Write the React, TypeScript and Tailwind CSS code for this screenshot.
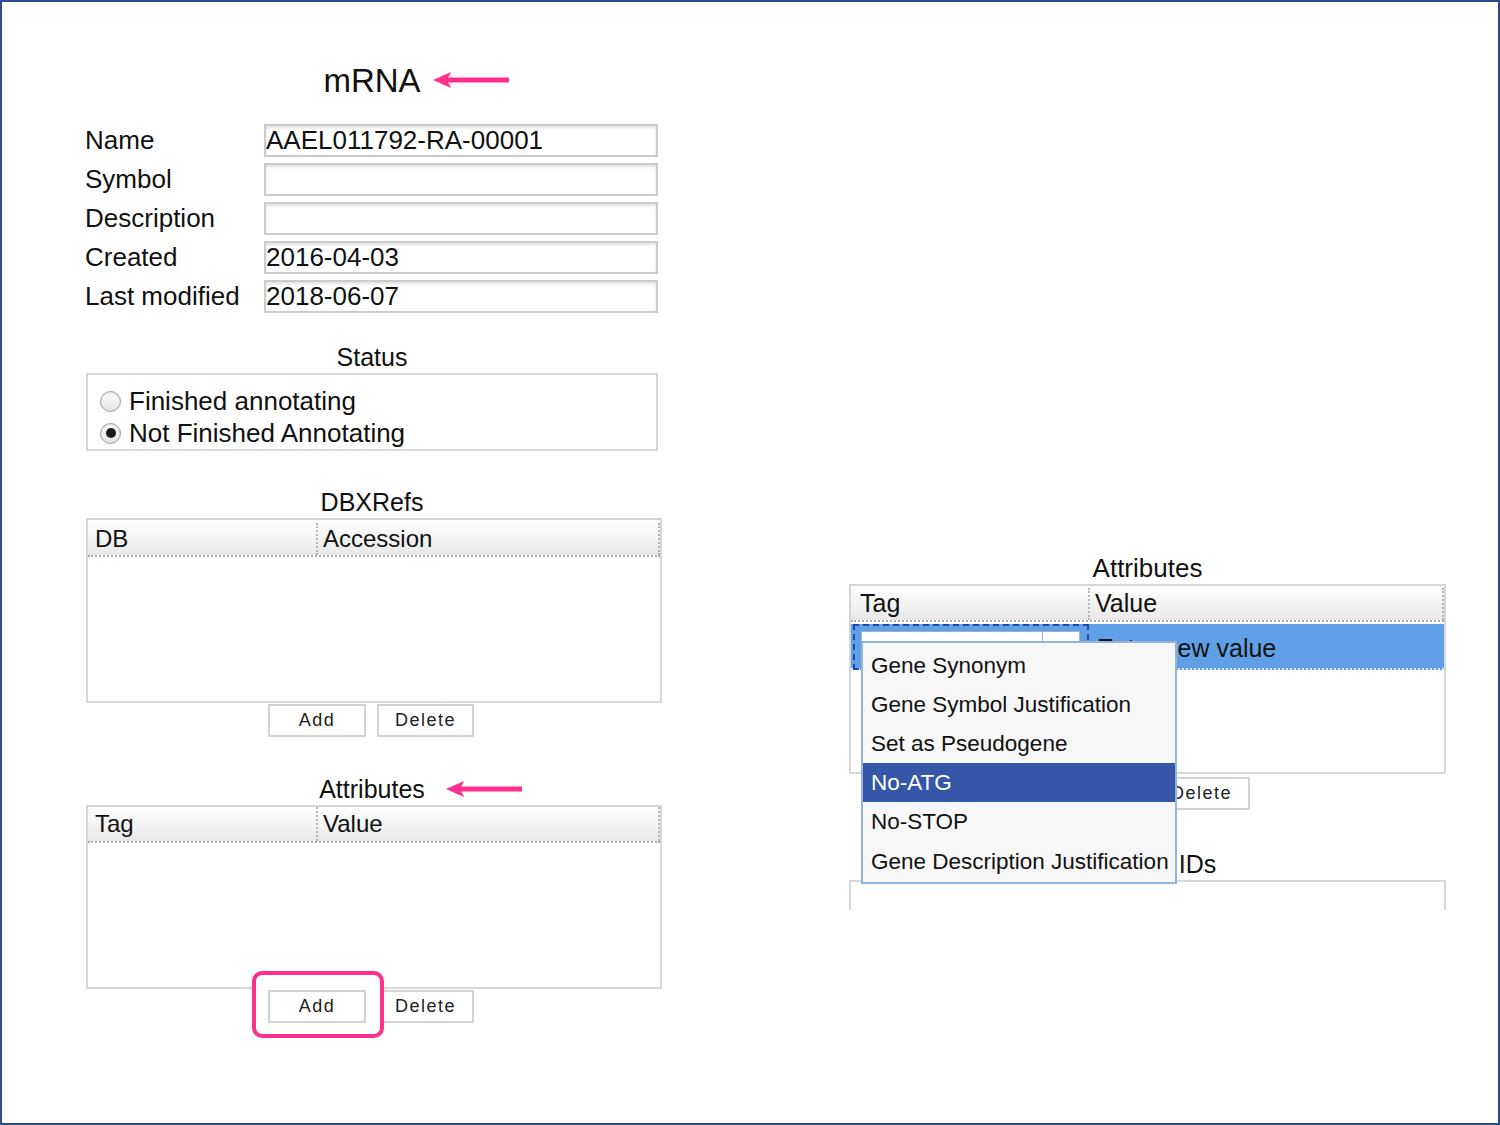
import React from "react";

const PINK = "#ff2f8e";

function Arrow({ className }: { className?: string }) {
  return (
    <svg width="78" height="18" viewBox="0 0 78 18" className={className}>
      <rect x="12" y="6.5" width="64" height="5" fill={PINK} />
      <polygon points="0,9 18,1 14,9 18,17" fill={PINK} />
    </svg>
  );
}

function Radio({ checked }: { checked?: boolean }) {
  return (
    <span className="w-[21px] h-[21px] rounded-full border border-[#9c9c9c] bg-linear-to-b from-white to-[#e4e4e4] flex items-center justify-center shadow-[inset_0_1px_2px_rgba(0,0,0,0.15)]">
      {checked && <span className="w-[10px] h-[10px] rounded-full bg-[#1a1a1a]" />}
    </span>
  );
}

function Btn({ label, className = "" }: { label: string; className?: string }) {
  return (
    <div
      className={`h-[33px] bg-white border-2 border-[#d2d2d2] flex items-center justify-center text-[18px] tracking-[1.5px] text-[#222] ${className}`}
    >
      {label}
    </div>
  );
}

function Header({
  first,
  second,
  firstW,
  h,
  pl,
  size,
}: {
  first: string;
  second: string;
  firstW: number;
  h: string;
  pl: string;
  size: string;
}) {
  return (
    <div className={`flex ${h} bg-linear-to-b from-white to-[#e8e8e8] border-b-2 border-dotted border-[#ababab] ${size}`}>
      <div className={`flex items-center ${pl} border-r-2 border-dotted border-[#b5b5b5]`} style={{ width: firstW }}>
        {first}
      </div>
      <div className="flex-1 flex items-center pl-[5px] border-r-2 border-dotted border-[#b5b5b5]">{second}</div>
    </div>
  );
}

const fields = [
  ["Name", "AAEL011792-RA-00001"],
  ["Symbol", ""],
  ["Description", ""],
  ["Created", "2016-04-03"],
  ["Last modified", "2018-06-07"],
];

const options = [
  "Gene Synonym",
  "Gene Symbol Justification",
  "Set as Pseudogene",
  "No-ATG",
  "No-STOP",
  "Gene Description Justification",
];

export default function App() {
  return (
    <div className="relative w-[1500px] h-[1125px] bg-white border-2 border-[#2d4c8c] flex items-start text-[#111] font-['Liberation_Sans',Arial,sans-serif]">
      {/* left panel */}
      <div className="ml-[83px] w-[577px] flex flex-col">
        <div className="mt-[62px] h-[34px] flex justify-center pr-[3px]">
          <div className="relative text-[33px] leading-[34px]">
            mRNA
            <Arrow className="absolute left-[calc(100%+12px)] top-[7px]" />
          </div>
        </div>

        <div className="mt-[26px] grid grid-cols-[179px_394px] gap-y-[6px]">
          {fields.map(([label, value]) => (
            <React.Fragment key={label}>
              <div className="h-[33px] flex items-center text-[26px]">{label}</div>
              <div className="h-[33px] border-2 border-[#cbcbcb] shadow-[inset_0_2px_3px_rgba(0,0,0,0.12)] flex items-center pl-[0px] text-[26px]">
                {value}
              </div>
            </React.Fragment>
          ))}
        </div>

        <div className="mt-[29px] h-[30px] leading-[30px] text-[25px] text-center pr-[3px]">Status</div>
        <div className="mt-[1px] ml-[1px] w-[572px] h-[78px] border-2 border-[#d6d6d6] pt-[10px] pl-[12px]">
          <div className="h-[32px] flex items-center gap-[8px] text-[26px]">
            <Radio />
            Finished annotating
          </div>
          <div className="h-[32px] flex items-center gap-[8px] text-[26px]">
            <Radio checked />
            Not Finished Annotating
          </div>
        </div>

        <div className="mt-[36px] h-[30px] leading-[30px] text-[25px] text-center pr-[3px]">DBXRefs</div>
        <div className="mt-[1px] ml-[1px] w-[576px] h-[185px] border-2 border-[#d6d6d6] bg-white">
          <Header first="DB" second="Accession" firstW={230} h="h-[37px] pt-[3px]" pl="pl-[7px]" size="text-[24px]" />
        </div>
        <div className="mt-[1px] pl-[183px] flex gap-[11px]">
          <Btn label="Add" className="w-[98px]" />
          <Btn label="Delete" className="w-[97px]" />
        </div>

        <div className="mt-[37px] h-[30px] flex justify-center pr-[3px]">
          <div className="relative text-[25px] leading-[30px]">
            Attributes
            <Arrow className="absolute left-[calc(100%+21px)] top-[6px]" />
          </div>
        </div>
        <div className="mt-[1px] ml-[1px] w-[576px] h-[184px] border-2 border-[#d6d6d6] bg-white">
          <Header first="Tag" second="Value" firstW={230} h="h-[36px]" pl="pl-[7px]" size="text-[24px]" />
        </div>
        <div className="mt-[1px] pl-[183px] flex gap-[11px]">
          <div className="relative w-[98px]">
            <span className="absolute left-[-16px] top-[-19px] right-[-18px] bottom-[-15px] border-4 border-[#ff2f8e] rounded-[10px] bg-white z-[1]" />
            <Btn label="Add" className="relative z-[2] w-[98px]" />
          </div>
          <Btn label="Delete" className="w-[97px]" />
        </div>
      </div>

      {/* right panel */}
      <div className="relative ml-[187px] mt-[551px] w-[597px] flex flex-col">
        <div className="h-[30px] leading-[30px] text-[26px] text-center">Attributes</div>
        <div className="mt-[1px] h-[190px] border-2 border-[#d6d6d6] bg-white">
          <Header first="Tag" second="Value" firstW={239} h="h-[36px] pt-[2px]" pl="pl-[9px]" size="text-[25px]" />
          <div className="mt-[2px] h-[46px] flex bg-[#60a0e6] border-b-2 border-dotted border-[#dce8f6]">
            <div className="w-[239px] pl-[2px]">
              <div className="w-[236px] h-[46px] border-2 border-dashed border-[#2447a8] pt-[5px] pl-[6px]">
                <div className="w-[219px] h-[28px] bg-white border border-[#9fb3cf] flex">
                  <div className="w-[181px] border-r border-[#9fb3cf]" />
                </div>
              </div>
            </div>
            <div className="flex-1 flex items-center pl-[7px] pt-[5px] text-[25px]">Enter new value</div>
          </div>
        </div>
        <div className="mt-[3px] pl-[195px] flex gap-[11px]">
          <Btn label="Add" className="w-[98px]" />
          <Btn label="Delete" className="w-[97px]" />
        </div>
        <div className="mt-[39px] h-[30px] leading-[30px] text-[25px] text-center">Pubmed IDs</div>
        <div className="mt-[1px] h-[30px] border-2 border-b-0 border-[#d6d6d6]" />

        {/* open dropdown */}
        <div className="absolute left-[12px] top-[88px] w-[316px] h-[243px] bg-[#f7f7f7] border-2 border-[#93b4dc] pt-[3px] z-10">
          {options.map((o, i) => (
            <div
              key={o}
              className={`${i === 5 ? "h-[41px]" : "h-[39px]"} flex items-center pl-[8px] text-[22.5px] whitespace-nowrap ${
                o === "No-ATG" ? "bg-[#3457a8] text-white" : ""
              }`}
            >
              {o}
            </div>
          ))}
        </div>
      </div>
    </div>
  );
}
